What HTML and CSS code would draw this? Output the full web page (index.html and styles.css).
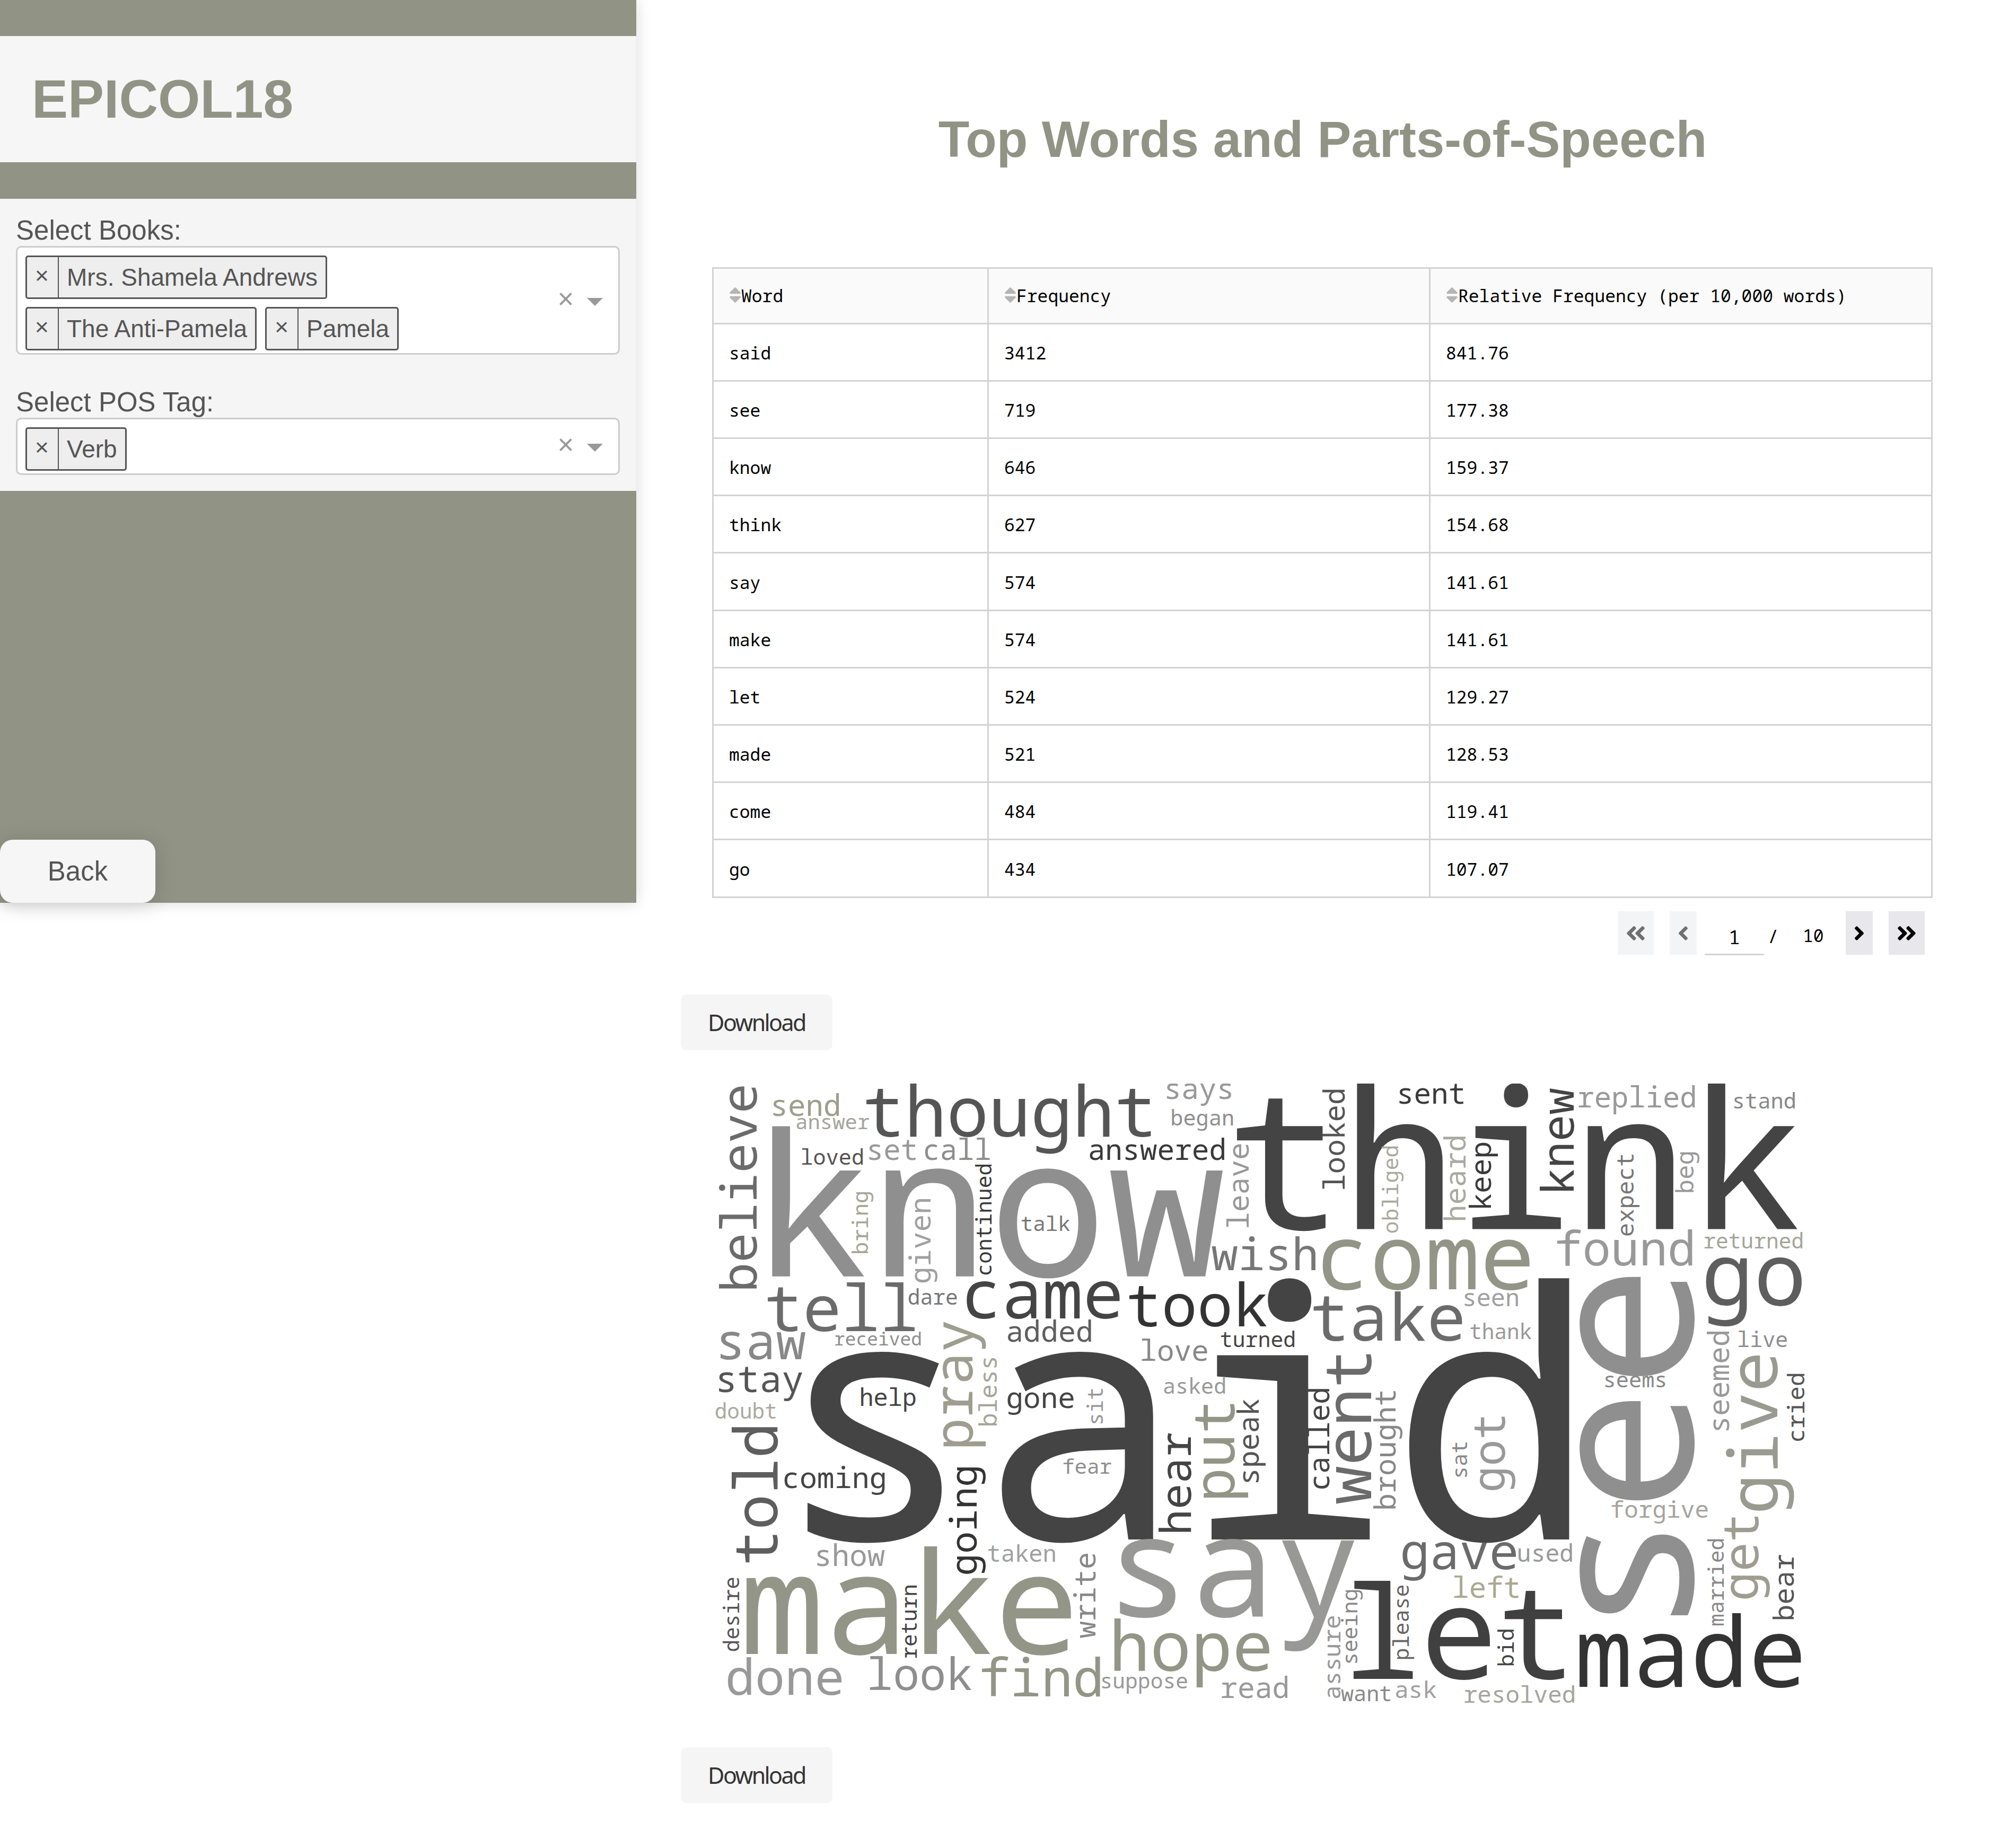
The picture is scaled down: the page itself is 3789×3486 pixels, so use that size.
FILE: index.html
```html
<!DOCTYPE html>
<html lang="en">
<head>
<meta charset="utf-8">
<title>EPICOL18</title>
<link rel="stylesheet" href="styles.css">
</head>
<body>
<svg class="defs" width="0" height="0" aria-hidden="true">
  <symbol id="sort" viewBox="0 0 320 512"><path d="M41 288h238c21.4 0 32.1 25.9 17 41L177 448c-9.4 9.4-24.6 9.4-33.9 0L24 329c-15.1-15.1-4.4-41 17-41zm255-105L177 64c-9.4-9.4-24.6-9.4-33.9 0L24 183c-15.1 15.1-4.4 41 17 41h238c21.4 0 32.1-25.9 17-41z"/></symbol>
  <symbol id="angle" viewBox="0 0 256 512"><path d="M31.7 239l136-136c9.4-9.4 24.6-9.4 33.9 0l22.6 22.6c9.4 9.4 9.4 24.6 0 33.9L127.9 256l96.4 96.4c9.4 9.4 9.4 24.6 0 33.9L201.7 409c-9.4 9.4-24.6 9.4-33.9 0l-136-136c-9.5-9.4-9.5-24.6-.1-34z"/></symbol>
  <symbol id="angles" viewBox="0 0 448 512"><path d="M223.7 239l136-136c9.4-9.4 24.6-9.4 33.9 0l22.6 22.6c9.4 9.4 9.4 24.6 0 33.9L319.9 256l96.4 96.4c9.4 9.4 9.4 24.6 0 33.9L393.7 409c-9.4 9.4-24.6 9.4-33.9 0l-136-136c-9.5-9.4-9.5-24.6-.1-34zm-192 34l136 136c9.4 9.4 24.6 9.4 33.9 0l22.6-22.6c9.4-9.4 9.4-24.6 0-33.9L127.9 256l96.4-96.4c9.4-9.4 9.4-24.6 0-33.9L201.7 103c-9.4-9.4-24.6-9.4-33.9 0l-136 136c-9.5 9.4-9.5 24.6-.1 34z"/></symbol>
</svg>
<aside class="sidebar">
  <header class="brand"><h1>EPICOL18</h1></header>
  <section class="filters">
    <label class="label">Select Books:</label>
    <div class="select">
      <div class="tags">
        <span class="tag"><i class="x">×</i><span class="name">Mrs. Shamela Andrews</span></span>
        <span class="tag"><i class="x">×</i><span class="name">The Anti-Pamela</span></span>
        <span class="tag"><i class="x">×</i><span class="name">Pamela</span></span>
      </div>
      <span class="clear">×</span><span class="arrow"></span>
    </div>
    <label class="label second">Select POS Tag:</label>
    <div class="select">
      <div class="tags">
        <span class="tag"><i class="x">×</i><span class="name">Verb</span></span>
      </div>
      <span class="clear">×</span><span class="arrow"></span>
    </div>
  </section>
  <button class="back">Back</button>
</aside>
<main class="main">
  <h1 class="title">Top Words and Parts-of-Speech</h1>
  <table class="table">
    <colgroup><col class="c1"><col class="c2"><col class="c3"></colgroup>
    <thead>
      <tr><th><div class="th"><svg class="sort"><use href="#sort"/></svg>Word</div></th><th><div class="th"><svg class="sort"><use href="#sort"/></svg>Frequency</div></th><th><div class="th"><svg class="sort"><use href="#sort"/></svg>Relative Frequency (per 10,000 words)</div></th></tr>
    </thead>
    <tbody>
      <tr><td>said</td><td>3412</td><td>841.76</td></tr>
      <tr><td>see</td><td>719</td><td>177.38</td></tr>
      <tr><td>know</td><td>646</td><td>159.37</td></tr>
      <tr><td>think</td><td>627</td><td>154.68</td></tr>
      <tr><td>say</td><td>574</td><td>141.61</td></tr>
      <tr><td>make</td><td>574</td><td>141.61</td></tr>
      <tr><td>let</td><td>524</td><td>129.27</td></tr>
      <tr><td>made</td><td>521</td><td>128.53</td></tr>
      <tr><td>come</td><td>484</td><td>119.41</td></tr>
      <tr><td>go</td><td>434</td><td>107.07</td></tr>
    </tbody>
  </table>
  <nav class="pager">
    <button class="page off"><svg class="wide"><use href="#angles"/></svg></button>
    <button class="page off"><svg class="slim"><use href="#angle"/></svg></button>
    <span class="current">1</span>
    <span class="slash">/</span>
    <span class="total">10</span>
    <button class="page next"><svg class="slim flip"><use href="#angle"/></svg></button>
    <button class="page"><svg class="wide flip"><use href="#angles"/></svg></button>
  </nav>
  <button class="download">Download</button>
  <svg class="cloud" id="cloud" viewBox="1284 2044 2140 1176"></svg>
  <button class="download">Download</button>
</main>
<script src="cloud.js"></script>
</body>
</html>
```
FILE: styles.css
```css
* { box-sizing: border-box; }
body { margin: 0; display: flex; align-items: flex-start; min-height: 3486px; background: #fff; color: #555; font-family: "Liberation Sans", Arial, sans-serif; font-size: 51px; }
button { border: 0; font: inherit; color: inherit; margin: 0; }
h1 { margin: 0; color: #919384; font-weight: bold; }
.defs { position: absolute; }

.sidebar { width: 1200px; height: 1703px; flex: none; padding-top: 68px; background: #919384; display: flex; flex-direction: column; box-shadow: 0 0 26px rgba(0,0,0,.15); }
.brand { height: 238px; padding-left: 60px; background: #f6f6f6; display: flex; align-items: center; }
.brand h1 { font-size: 102px; line-height: 118px; }
.filters { margin-top: 69px; height: 551px; padding: 30px 31px 30px 30px; background: #f5f5f5; }
.label { display: block; line-height: 60px; height: 59px; }
.second { margin-top: 60px; }
.select { display: flex; align-items: center; background: #fff; border: 3px solid #ccc; border-radius: 10px; padding-right: 29px; }
.tags { flex: 1; display: flex; flex-wrap: wrap; gap: 15px 16px; padding: 15px 0 5px 15px; }
.tag { display: flex; height: 82px; border: 3px solid #555; border-radius: 5px; background: #eee; font-size: 46px; line-height: 76px; }
.x { width: 60px; padding-right: 2px; border-right: 2px solid #555; font-style: normal; font-size: 45px; line-height: 70px; text-align: center; }
.name { padding: 0 15px; }
.clear { width: 44px; margin-right: 18px; text-align: center; color: #999; font-size: 53px; line-height: 60px; margin-top: -6px; }
.arrow { width: 30px; border: 15px solid transparent; border-top-color: #999; border-bottom: 0; margin-top: 5px; }
.back { margin-top: auto; width: 293px; height: 119px; border-radius: 24px; background: #f6f6f6; box-shadow: 0 5px 40px rgba(0,0,0,.15); padding: 0; text-align: center; }

.main { flex: 1; min-width: 0; padding-left: 84px; display: flex; flex-direction: column; align-items: flex-start; }
.title { width: 100%; padding-right: 84px; margin: 207px 0 186px; text-align: center; font-size: 95.8px; line-height: 111px; }
.table { margin-left: 59px; width: 2302px; table-layout: fixed; border-collapse: collapse; color: #000; font-family: "Noto Sans Mono", "DejaVu Sans Mono", monospace; font-size: 33px; }
.c1 { width: 519px; }
.c2 { width: 833px; }
.table th, .table td { border: 3px solid #d3d3d3; padding: 3px 0 0 29px; height: 108px; text-align: left; font-weight: normal; line-height: 38px; }
.table th { background: #fafafa; height: 105px; padding-top: 0; }
.table tr:nth-child(5n) td { height: 109px; }
.th { display: flex; align-items: center; }
.sort { width: 23px; height: 37px; fill: #b5b5b5; margin-top: -4px; }

.pager { align-self: flex-end; display: flex; align-items: flex-start; margin: 25px 159px 75px 0; height: 82px; color: #000; font-family: "Noto Sans Mono", "DejaVu Sans Mono", monospace; font-size: 33px; }
.page { height: 82px; padding: 0 15px; margin-left: 30px; background: #e8e8ec; display: flex; align-items: center; }
.page:first-child { margin-left: 0; }
.off { background: #f3f4f6; fill: #6f6f6f; }
.page svg { height: 43px; }
.wide { width: 38px; }
.slim { width: 21px; }
.flip { transform: scaleX(-1); }
.current { width: 112px; height: 83px; margin-left: 15px; border-bottom: 3px solid #d3d3d3; text-align: center; font-size: 36.5px; line-height: 97px; }
.slash { width: 20px; margin-left: 7px; line-height: 94px; font-size: 34px; }
.total { width: 40px; margin-left: 46px; line-height: 92px; }
.next { margin-left: 41px; }

.download { width: 286px; height: 105px; border-radius: 11px; background: #f5f5f5; color: #333; font-family: "Noto Sans", "Open Sans", sans-serif; font-size: 43px; letter-spacing: -2.6px; padding: 0; }
.cloud { width: 2140px; height: 1176px; margin: 63px 0 76px; overflow: hidden; font-family: "Droid Sans Mono", "Noto Mono", "Noto Sans Mono", "DejaVu Sans Mono", monospace; }
```
FILE: cloud.js
```js
// Horizontal words: text, left edge, right edge, baseline, colour.
const across = [
  ["send", 1458.5, 1582, 2105, "#9d9e8c"], ["answer", 1502.7, 1639.5, 2129.5, "#a5a59b"],
  ["thought", 1634, 2171, 2144, "#555"], ["says", 2200.7, 2322, 2073, "#999"],
  ["began", 2210.5, 2325, 2123, "#8e8e8e"], ["answered", 2055.5, 2308.8, 2188, "#3a3a3a"],
  ["loved", 1512.6, 1627, 2197, "#555"], ["set", 1639.5, 1727, 2188, "#999"],
  ["call", 1744.8, 1866.8, 2188, "#8e8e8e"], ["know", 1456.4, 2306, 2407.7, "#8f8f8f"],
  ["talk", 1927, 2017.6, 2321.6, "#777"], ["wish", 2285.6, 2481, 2396, "#777"],
  ["tell", 1448, 1725, 2510.6, "#6b6b6b"], ["dare", 1713.9, 1804.4, 2460.9, "#777"],
  ["came", 1823.3, 2111.6, 2487.3, "#444"], ["took", 2129.9, 2388.7, 2502.2, "#333"],
  ["added", 1901, 2057.6, 2531.3, "#5e5e5e"], ["saw", 1359, 1518.9, 2564.2, "#888"],
  ["received", 1575, 1736.3, 2538, "#8e8e8e"], ["love", 2153.7, 2276.5, 2567, "#888"],
  ["turned", 2303, 2441, 2540.5, "#444"], ["stay", 1356, 1513, 2626, "#555"],
  ["asked", 2195.8, 2310, 2629, "#999"], ["help", 1624, 1726.5, 2652, "#444"],
  ["gone", 1900.5, 2024.6, 2655.5, "#444"], ["doubt", 1349.8, 1462.7, 2676.3, "#a9aa9d"],
  ["coming", 1479.6, 1668.3, 2807, "#444"], ["fear", 2005.7, 2096, 2780, "#8e8e8e"],
  ["said", 1523, 2959.4, 2904, "#444"], ["show", 1541.3, 1668.3, 2954.3, "#999"],
  ["taken", 1864, 1989.6, 2946, "#a0a0a0"], ["make", 1408, 2019.7, 3120, "#939586"],
  ["say", 2112.3, 2554.5, 3049.4, "#989896"], ["done", 1373, 1587, 3197, "#999"],
  ["look", 1641, 1831.7, 3188, "#8e8e8e"], ["find", 1852, 2074.5, 3200, "#939586"],
  ["hope", 2101.8, 2393.8, 3152, "#939586"], ["suppose", 2078.7, 2238.6, 3185, "#999"],
  ["read", 2304.4, 2428, 3202.9, "#999"], ["think", 2332.7, 3389.8, 2318.5, "#444"],
  ["sent", 2639.5, 2760, 2082, "#3a3a3a"], ["replied", 2977.6, 3196.4, 2088.5, "#999"],
  ["stand", 3271, 3384.7, 2091, "#888"], ["come", 2494.8, 2884.5, 2431.8, "#939586"],
  ["found", 2936.9, 3191.3, 2386.6, "#999"], ["returned", 3214.6, 3399.2, 2354.5, "#a5a59b"],
  ["go", 3217.5, 3397.8, 2461.5, "#5e5e5e"], ["take", 2477.4, 2757.3, 2528.6, "#6b6b6b"],
  ["seen", 2762.4, 2862.7, 2464, "#a0a0a0"], ["thank", 2773.3, 2888, 2526.3, "#999"],
  ["live", 3279.3, 3370, 2540.5, "#8e8e8e"], ["seems", 3027.7, 3140.4, 2617, "#888"],
  ["forgive", 3039.4, 3220.4, 2862.9, "#a5a59b"], ["gave", 2645.5, 2859, 2960, "#6b6b6b"],
  ["used", 2864.2, 2964.5, 2946, "#999"], ["left", 2742.7, 2864, 3013.9, "#a9aa90"],
  ["let", 2553, 2950.7, 3167.3, "#404040"], ["made", 2979, 3396.3, 3182.4, "#333"],
  ["want", 2529.7, 2622, 3209, "#888"], ["ask", 2633, 2708.6, 3202.9, "#a0a0a0"],
  ["resolved", 2762.4, 2968.8, 3211.8, "#a5a59b"]
];

// Words turned a quarter left: text, top edge, bottom edge, baseline, colour.
const upward = [
  ["believe", 2049.5, 2430.6, 1427, "#6b6b6b"], ["bring", 2248.9, 2363.7, 1636.7, "#a5a695"],
  ["given", 2261.9, 2419.2, 1755.3, "#a0a0a0"], ["continued", 2196.8, 2404.2, 1870.3, "#3a3a3a"],
  ["leave", 2158.5, 2314.7, 2355, "#999"], ["pray", 2493.4, 2728.2, 1833.8, "#9d9e90"],
  ["bless", 2561.9, 2688.6, 1880, "#a5a59b"], ["sit", 2619.6, 2684.9, 2080, "#999"],
  ["told", 2692.2, 2947.3, 1465.6, "#5e5e5e"], ["going", 2768.2, 2969, 1841.6, "#333"],
  ["hear", 2702.9, 2889.4, 2246.3, "#444"], ["put", 2648.2, 2824.9, 2328.4, "#939586"],
  ["speak", 2639.6, 2795.9, 2374, "#555"], ["write", 2931, 3089.8, 2066, "#888"],
  ["desire", 2976.3, 3114.3, 1394, "#555"], ["return", 2991, 3127.3, 1728.6, "#444"],
  ["looked", 2055.6, 2242.7, 2536.3, "#555"], ["obliged", 2162.7, 2325.4, 2636.6, "#a9aa9d"],
  ["heard", 2144.4, 2301.3, 2763.8, "#a9aaa0"], ["keep", 2155.9, 2278, 2811.8, "#3a3a3a"],
  ["knew", 2053.3, 2245.8, 2968, "#444"], ["expect", 2178, 2330.7, 3080.8, "#777"],
  ["beg", 2173.8, 2248.5, 3193.5, "#999"], ["see", 2408.8, 3046.9, 3192.2, "#8f8f8f"],
  ["went", 2554.3, 2836.7, 2585.7, "#6b6b6b"], ["seemed", 2512, 2698, 3261, "#999"],
  ["give", 2557, 2849.8, 3352, "#999a90"], ["cried", 2591.8, 2718, 3402.9, "#555"],
  ["called", 2620.4, 2808, 2507, "#444"], ["brought", 2624, 2845.3, 2631.5, "#888"],
  ["sat", 2721, 2785.7, 2766.7, "#888"], ["got", 2672.2, 2811, 2838, "#999"],
  ["get", 2860.8, 3015.5, 3316.3, "#9d9e90"], ["married", 2903.7, 3066, 3251, "#888"],
  ["bear", 2932.6, 3054.3, 3382.5, "#555"], ["please", 2991, 3129.4, 2657, "#666"],
  ["seeing", 2999.6, 3136.7, 2559.5, "#888"], ["assure", 3049, 3203, 2527.6, "#999"],
  ["bid", 3074.3, 3141.2, 2855.4, "#444"]
];

const cloud = document.getElementById("cloud");
const pen = document.createElement("canvas").getContext("2d");
pen.font = "200px " + getComputedStyle(cloud).fontFamily;

// Sizes a word so that its ink spans the given length.
function addWord(text, length, color, place) {
  const m = pen.measureText(text);
  const scale = length / (m.actualBoundingBoxRight + m.actualBoundingBoxLeft);
  const node = document.createElementNS("http://www.w3.org/2000/svg", "text");
  node.textContent = text;
  node.setAttribute("font-size", (200 * scale).toFixed(2));
  node.setAttribute("fill", color);
  node.setAttribute("transform", place(m.actualBoundingBoxLeft * scale));
  cloud.appendChild(node);
}

for (const [text, left, right, base, color] of across) {
  addWord(text, right - left, color, (inset) => `translate(${left + inset} ${base})`);
}
for (const [text, top, bottom, base, color] of upward) {
  addWord(text, bottom - top, color, (inset) => `translate(${base} ${bottom - inset}) rotate(-90)`);
}
```
